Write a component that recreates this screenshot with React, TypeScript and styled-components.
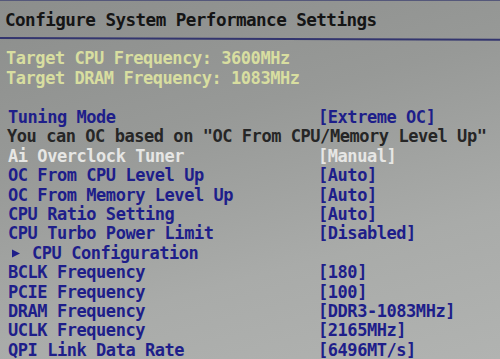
import React from "react";
import styled, { createGlobalStyle } from "styled-components";

const Global = createGlobalStyle`
  html, body { margin: 0; padding: 0; }
  body {
    width: 500px;
    height: 359px;
    overflow: hidden;
    background: #9a9c9a;
  }
`;

type Tone = "blue" | "dark" | "light";

interface Row {
  label: string;
  value?: string;
  tone: Tone;
  sub?: boolean;
  full?: boolean;
}

const rows: Row[] = [
  { label: "Tuning Mode", value: "[Extreme OC]", tone: "blue" },
  { label: 'You can OC based on "OC From CPU/Memory Level Up"', tone: "dark", full: true },
  { label: "Ai Overclock Tuner", value: "[Manual]", tone: "light" },
  { label: "OC From CPU Level Up", value: "[Auto]", tone: "blue" },
  { label: "OC From Memory Level Up", value: "[Auto]", tone: "blue" },
  { label: "CPU Ratio Setting", value: "[Auto]", tone: "blue" },
  { label: "CPU Turbo Power Limit", value: "[Disabled]", tone: "blue" },
  { label: "CPU Configuration", tone: "blue", sub: true },
  { label: "BCLK Frequency", value: "[180]", tone: "blue" },
  { label: "PCIE Frequency", value: "[100]", tone: "blue" },
  { label: "DRAM Frequency", value: "[DDR3-1083MHz]", tone: "blue" },
  { label: "UCLK Frequency", value: "[2165MHz]", tone: "blue" },
  { label: "QPI Link Data Rate", value: "[6496MT/s]", tone: "blue" },
];

const colors: Record<Tone, string> = {
  blue: "#1e1e8a",
  dark: "#262626",
  light: "#e6e6e4",
};

const App: React.FC = () => {
  return (
    <Screen>
      <Global />
      <Header>
        <Title>Configure System Performance Settings</Title>
      </Header>
      <Rule />
      <Info>
        <InfoLine>Target CPU Frequency: 3600MHz</InfoLine>
        <InfoLine>Target DRAM Frequency: 1083MHz</InfoLine>
      </Info>
      <Menu>
        {rows.map((r) =>
          r.full ? (
            <Wide key={r.label} tone={r.tone}>
              {r.label}
            </Wide>
          ) : (
            <React.Fragment key={r.label}>
              <Label tone={r.tone}>
                {r.sub && (
                  <Arrow viewBox="0 0 8 8">
                    <path d="M0 0 L8 4 L0 8 Z" fill="currentColor" />
                  </Arrow>
                )}
                {r.label}
              </Label>
              <Value tone={r.tone}>{r.value ?? ""}</Value>
            </React.Fragment>
          )
        )}
      </Menu>
    </Screen>
  );
};

export default App;

const Screen = styled.div`
  width: 500px;
  height: 359px;
  overflow: hidden;
  box-sizing: border-box;
  background: linear-gradient(165deg, #8c8e8c 0%, #979997 35%, #a9aba9 70%, #b1b3b1 100%);
  font-family: "DejaVu Sans Mono", "Liberation Mono", monospace;
  font-weight: bold;
  white-space: pre;
`;

const Header = styled.div`
  padding: 9px 0 0 5px;
  height: 28px;
  box-sizing: border-box;
  border-top: 1px solid #55587a;
`;

const Title = styled.div`
  font-size: 17.6px;
  letter-spacing: -0.55px;
  line-height: 20px;
  color: #151515;
`;

const Rule = styled.div`
  height: 2px;
  margin-top: 9px;
  background: #33356e;
  transform: rotate(0.2deg);
  transform-origin: left center;
`;

const Info = styled.div`
  padding: 9px 0 0 6px;
  height: 69px;
  box-sizing: border-box;
`;

const InfoLine = styled.div`
  font-size: 17px;
  letter-spacing: -0.45px;
  line-height: 20px;
  color: #d8dea0;
`;

const Menu = styled.div`
  display: grid;
  grid-template-columns: 310px 1fr;
  grid-auto-rows: 19.4px;
  padding-left: 8px;
  font-size: 17px;
  letter-spacing: -0.45px;
  line-height: 19.4px;
`;

const Label = styled.div<{ tone: Tone }>`
  color: ${(p) => colors[p.tone]};
`;

const Value = styled.div<{ tone: Tone }>`
  color: ${(p) => colors[p.tone]};
`;

const Wide = styled.div<{ tone: Tone }>`
  grid-column: 1 / -1;
  color: ${(p) => colors[p.tone]};
  margin-left: -1px;
`;

const Arrow = styled.svg`
  width: 8px;
  height: 9px;
  margin: 0 12px 0 4px;
  vertical-align: 1px;
`;
